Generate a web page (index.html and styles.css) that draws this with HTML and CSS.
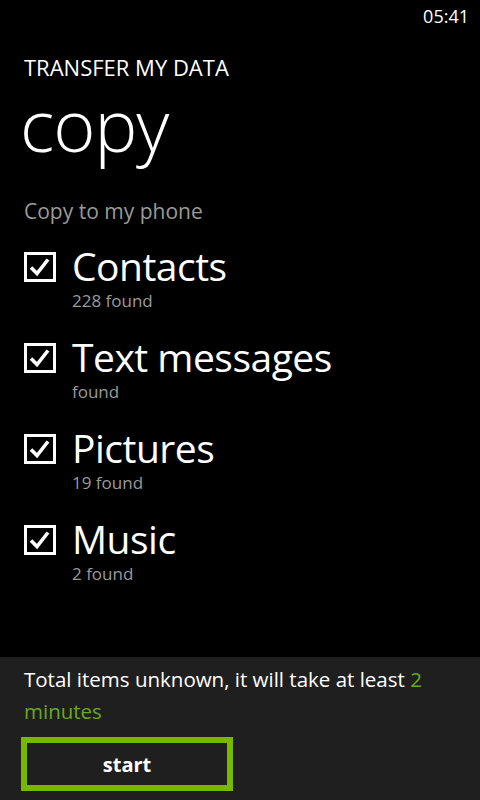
FILE: index.html
```html
<!DOCTYPE html>
<html lang="en">
<head>
  <meta charset="UTF-8" />
  <meta name="viewport" content="width=device-width, initial-scale=1.0" />
  <title>Transfer my data</title>
  <link rel="stylesheet" href="styles.css">
</head>
<body>
  <div class="status">05:41</div>

  <div class="app-title">TRANSFER MY DATA</div>
  <h1 class="page-title">copy</h1>

  <div class="section">Copy to my phone</div>

  <ul class="items">
    <li class="item">
      <span class="check"><svg viewBox="0 0 32 30" width="32" height="30"><rect x="1.5" y="1.5" width="29" height="27" fill="none" stroke="#fff" stroke-width="3"/><path d="M7 15.5 L13 21.5 L24 7.5" fill="none" stroke="#fff" stroke-width="3.6"/></svg></span>
      <div class="item-text">
        <div class="item-name">Contacts</div>
        <div class="item-info">228 found</div>
      </div>
    </li>
    <li class="item">
      <span class="check"><svg viewBox="0 0 32 30" width="32" height="30"><rect x="1.5" y="1.5" width="29" height="27" fill="none" stroke="#fff" stroke-width="3"/><path d="M7 15.5 L13 21.5 L24 7.5" fill="none" stroke="#fff" stroke-width="3.6"/></svg></span>
      <div class="item-text">
        <div class="item-name">Text messages</div>
        <div class="item-info">found</div>
      </div>
    </li>
    <li class="item">
      <span class="check"><svg viewBox="0 0 32 30" width="32" height="30"><rect x="1.5" y="1.5" width="29" height="27" fill="none" stroke="#fff" stroke-width="3"/><path d="M7 15.5 L13 21.5 L24 7.5" fill="none" stroke="#fff" stroke-width="3.6"/></svg></span>
      <div class="item-text">
        <div class="item-name">Pictures</div>
        <div class="item-info">19 found</div>
      </div>
    </li>
    <li class="item">
      <span class="check"><svg viewBox="0 0 32 30" width="32" height="30"><rect x="1.5" y="1.5" width="29" height="27" fill="none" stroke="#fff" stroke-width="3"/><path d="M7 15.5 L13 21.5 L24 7.5" fill="none" stroke="#fff" stroke-width="3.6"/></svg></span>
      <div class="item-text">
        <div class="item-name">Music</div>
        <div class="item-info">2 found</div>
      </div>
    </li>
  </ul>

  <div class="footer">
    <p class="estimate">Total items unknown, it will take at least <span class="accent">2 minutes</span></p>
    <button class="start">start</button>
  </div>
</body>
</html>
```

FILE: styles.css
```css
html, body {
  height: 100%;
}

body {
  margin: 0;
  background: #000;
  color: #fff;
  font-family: 'Open Sans', 'Noto Sans', sans-serif;
  display: flex;
  flex-direction: column;
  overflow: hidden;
}

.status {
  align-self: flex-end;
  padding: 5px 11px 0 0;
  font-size: 18px;
  line-height: 22px;
}

.app-title {
  margin: 25px 0 0 24px;
  font-size: 22px;
  line-height: 30px;
}

.page-title {
  margin: 0 0 0 20px;
  font-size: 72px;
  font-weight: 300;
  line-height: 84px;
  letter-spacing: -1px;
}

.section {
  margin: 30px 0 0 24px;
  font-size: 21px;
  line-height: 30px;
  color: #9a9a9a;
}

.items {
  list-style: none;
  margin: 16px 0 0 24px;
  padding: 0;
}

.item {
  display: flex;
  align-items: flex-start;
  gap: 16px;
  height: 91px;
}

.check {
  display: block;
  margin-top: 10px;
  width: 32px;
  height: 30px;
}

.check svg {
  display: block;
}

.item-name {
  font-size: 39px;
  line-height: 48px;
  letter-spacing: -0.5px;
}

.item-info {
  font-size: 17px;
  line-height: 22px;
  color: #9a9a9a;
}

.footer {
  margin-top: auto;
  background: #1f1f1f;
  padding: 6px 24px 9px 24px;
}

.estimate {
  margin: 0;
  font-size: 20.5px;
  line-height: 32px;
}

.accent {
  color: #6aa820;
}

.start {
  display: block;
  margin: 10px 0 0 -3px;
  width: 212px;
  height: 54px;
  background: transparent;
  border: 6px solid #79b800;
  color: #fff;
  font-family: inherit;
  font-size: 20px;
  font-weight: 700;
}
```
